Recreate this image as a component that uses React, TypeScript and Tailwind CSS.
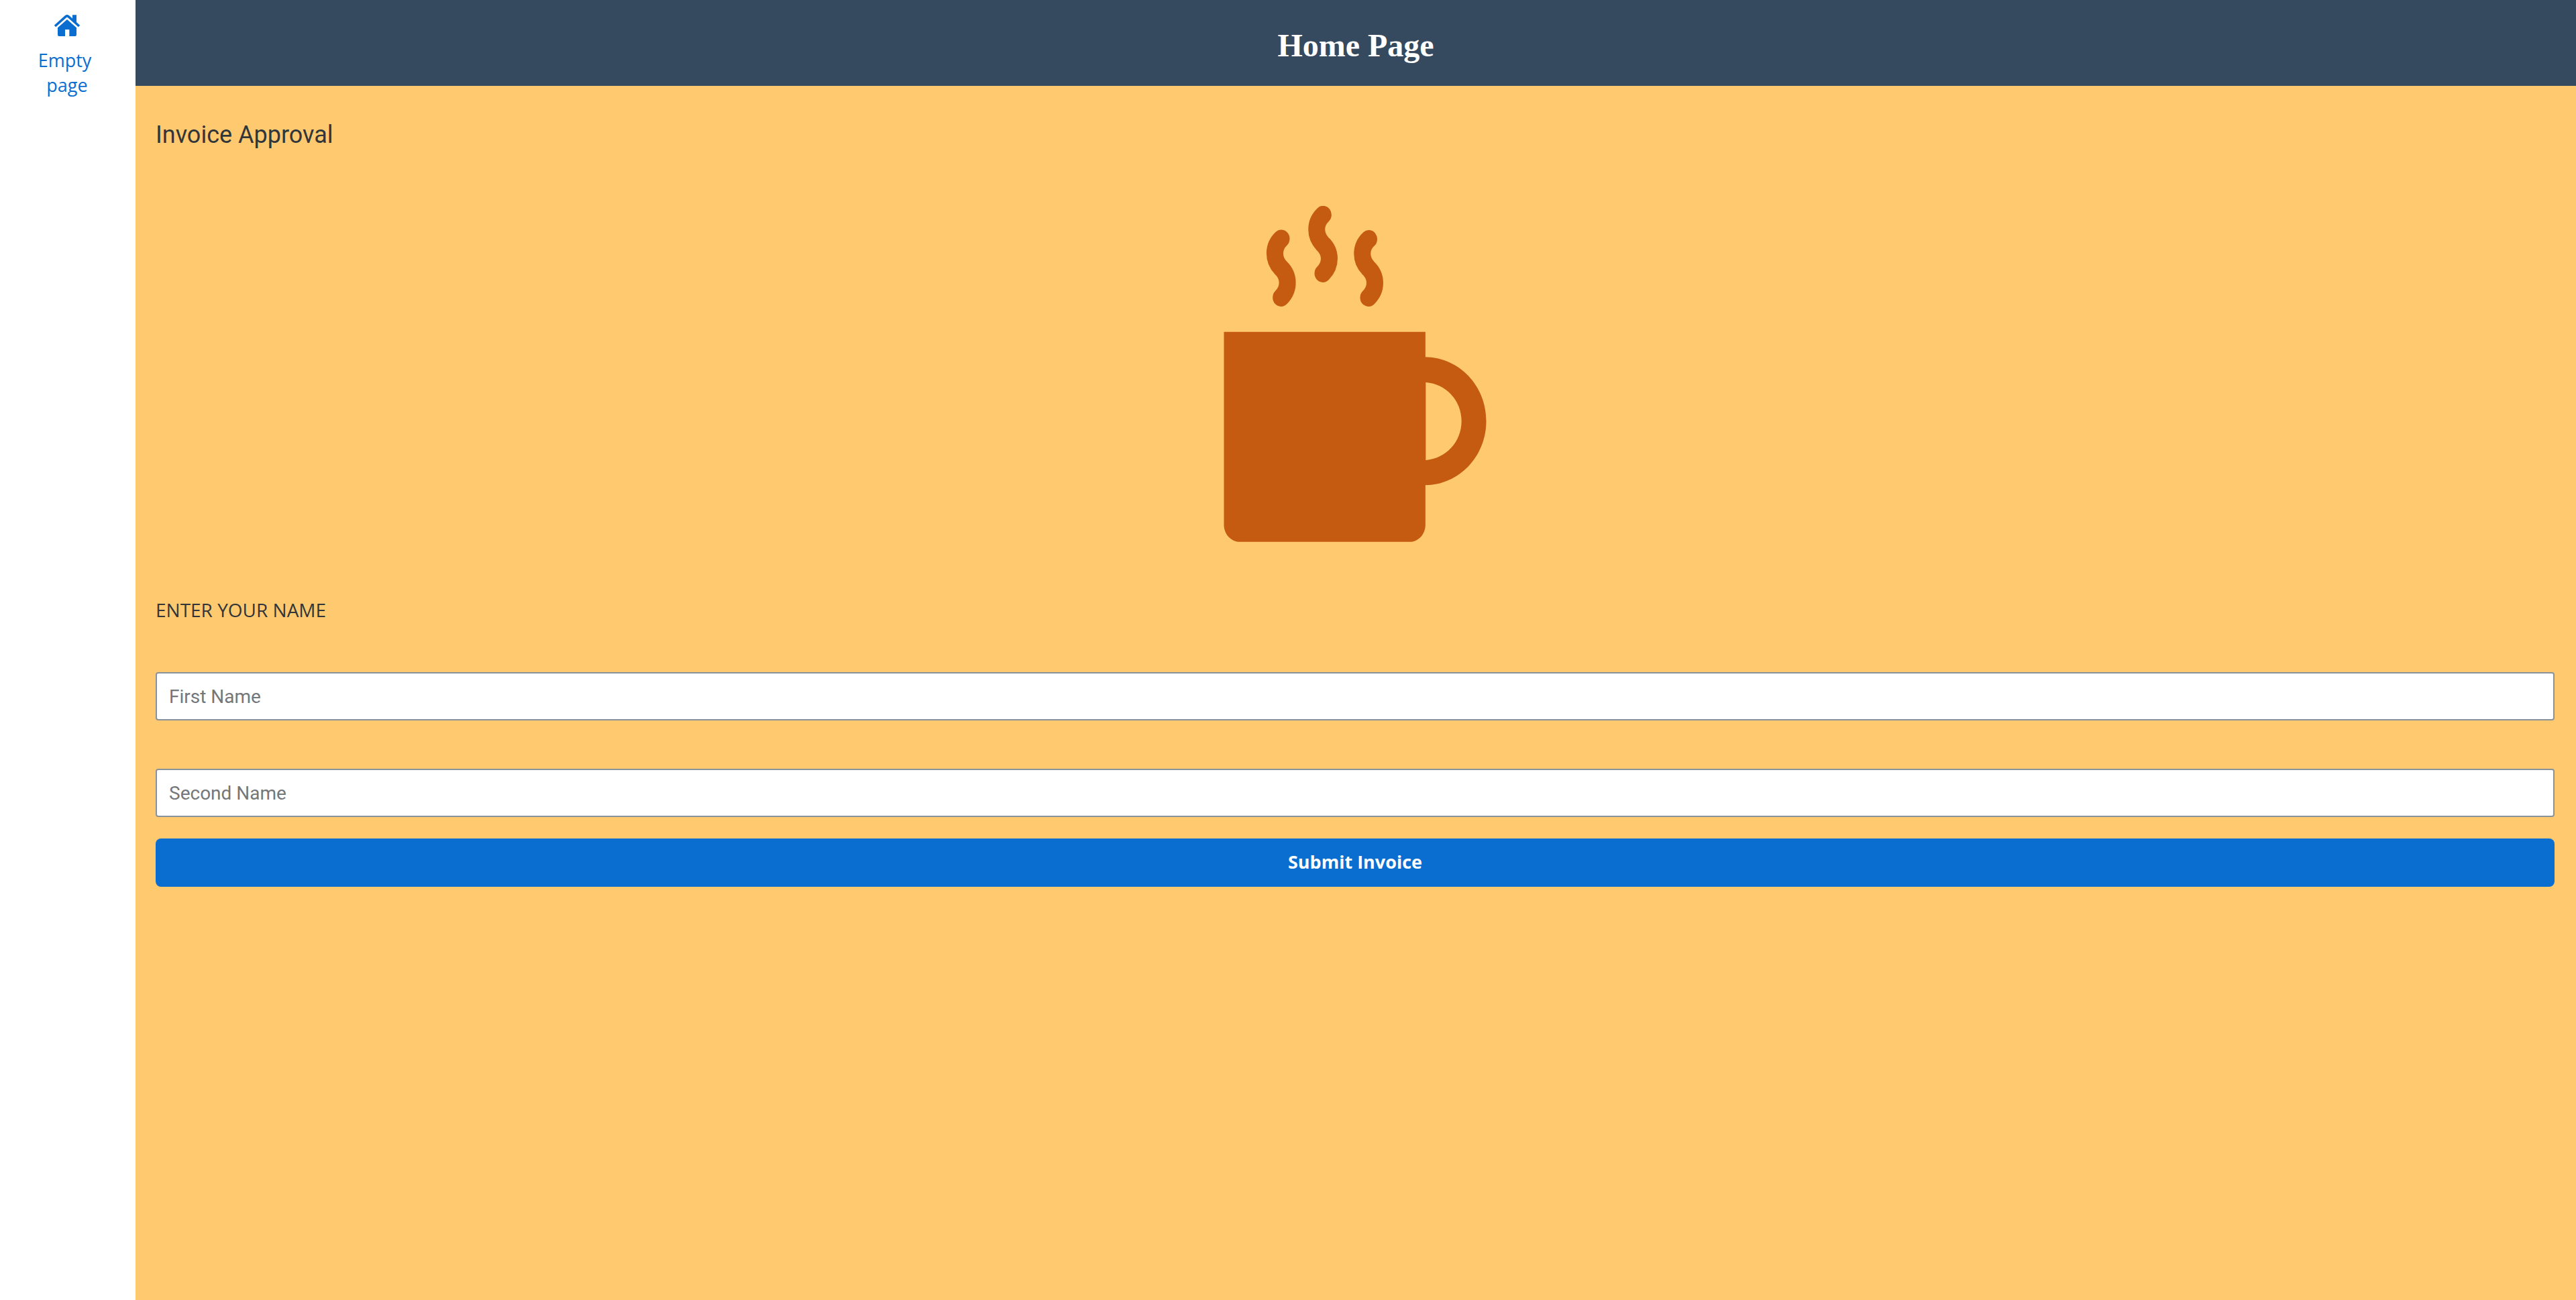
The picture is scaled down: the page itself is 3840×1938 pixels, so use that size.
function HomeIcon() {
  return (
    <svg viewBox="0 0 120 96" className="h-8 w-10" fill="currentColor" aria-hidden="true">
      <path d="M60 21 L102 58 V90 Q102 96 96 96 H70 V66 H51 V96 H24 Q18 96 18 90 V58 Z" />
      <path
        d="M6 51 L54 8 Q60 3 66 8 L114 51"
        fill="none"
        stroke="currentColor"
        strokeWidth="11"
        strokeLinejoin="round"
        strokeLinecap="butt"
      />
      <path d="M84 1 H102 V42 L84 25 Z" />
    </svg>
  );
}

function CoffeeMug() {
  return (
    <svg viewBox="129 81 1182 1503" className="h-[501px] w-[394px] text-[#c55a11]" role="img" aria-label="Hot drink">
      <g transform="scale(1 1.0714)">
        <path
          fill="currentColor"
          fillRule="evenodd"
          d="M133.5 601 H1034.5 V706.5 C1185 708 1306.5 826 1306.5 973.5 C1306.5 1121 1185 1240 1034.5 1241 V1406 C1034.5 1446 1003 1478 963 1478 H206 C166 1478 133.5 1446 133.5 1406 Z M1036 812 V1136.5 C1125 1131 1196 1062 1196 974 C1196 886 1125 818 1036 812 Z"
        />
        <g fill="none" stroke="currentColor" strokeWidth="75" strokeLinecap="round">
          <path d="M390 212.5 C352 246 352 299 388 334 C427 369 427 422 389 458" />
          <path d="M577 112.5 C539 146 539 199 575 234 C614 268 614 321 576 357" />
          <path d="M781.5 214 C743 247 743 300 779 335 C818 370 818 423 780 458" />
        </g>
      </g>
    </svg>
  );
}

function NameField({ label }: { label: string }) {
  return (
    <input
      type="text"
      placeholder={label}
      aria-label={label}
      className="h-18 w-full rounded-sm border-2 border-[#89919a] bg-white px-[18px] text-[28px] text-[#32363a] placeholder:text-[#74777a] placeholder:opacity-100"
    />
  );
}

export default function App() {
  return (
    <div className="flex min-h-screen bg-white font-[Roboto,sans-serif]">
      <nav className="w-[202px] shrink-0 pt-[22px] pr-0.5">
        <a
          href="#empty"
          className="mx-auto flex w-fit flex-col items-center text-center font-['Open_Sans',sans-serif] text-[27px] leading-[37px] text-[#0a6ed1]"
        >
          <HomeIcon />
          <span className="mt-[17px] whitespace-pre-wrap">{"Empty \npage"}</span>
        </a>
      </nav>

      <div className="flex flex-1 flex-col bg-[#ffc96f]">
        <header className="flex h-32 items-center justify-center bg-[#354a5f] pt-2">
          <h1 className="font-['Liberation_Serif',serif] text-5xl font-bold text-white">Home Page</h1>
        </header>

        <main className="pt-12 pr-8 pl-[30px] text-[#32363a]">
          <h2 className="text-4xl leading-[50px]">Invoice Approval</h2>
          <div className="mt-[81px] flex justify-center">
            <CoffeeMug />
          </div>
          <form onSubmit={(e) => e.preventDefault()}>
            <p className="mt-[81px] font-['Open_Sans',sans-serif] text-[28px] leading-[40px]">ENTER YOUR NAME</p>
            <div className="mt-[73px] flex flex-col gap-18">
              <NameField label="First Name" />
              <NameField label="Second Name" />
            </div>
            <button
              type="submit"
              className="mt-8 h-18 w-full rounded-lg bg-[#0a6ed1] pb-0.5 font-['Open_Sans',sans-serif] text-[27px] font-bold text-white"
            >
              Submit Invoice
            </button>
          </form>
        </main>
      </div>
    </div>
  );
}
